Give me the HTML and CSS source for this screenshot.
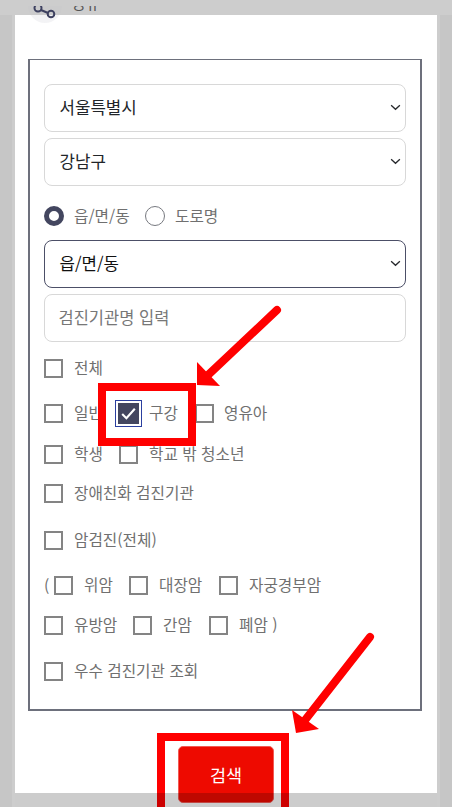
FILE: index.html
```html
<!DOCTYPE html>
<html lang="ko">
<head>
<meta charset="utf-8">
<title>검진기관 찾기</title>
<link rel="stylesheet" href="styles.css">
</head>
<body>
<div class="page">
  <div class="behind">
    <span class="share-icon">
      <svg width="34" height="34" viewBox="0 0 34 34"><circle cx="10" cy="19" r="3.500"/><circle cx="23" cy="25" r="3.300"/><path d="M13 21 L20 24"/></svg>
    </span>
    <span class="share-label">공유</span>
  </div>
  <main class="modal">
    <form class="box">
      <div class="select"><span>서울특별시</span><svg class="chev" viewBox="0 0 12 8"><path d="M1 1.500 L6 6 L11 1.500"/></svg></div>
      <div class="select"><span>강남구</span><svg class="chev" viewBox="0 0 12 8"><path d="M1 1.500 L6 6 L11 1.500"/></svg></div>
      <div class="radios">
        <span class="radio on"></span><span class="lbl w-r">읍/면/동</span>
        <span class="radio"></span><span class="lbl">도로명</span>
      </div>
      <div class="select focus"><span>읍/면/동</span><svg class="chev" viewBox="0 0 12 8"><path d="M1 1.500 L6 6 L11 1.500"/></svg></div>
      <div class="select input"><span>검진기관명 입력</span></div>
      <div class="row r1"><span class="cb"></span><span class="lbl">전체</span></div>
      <div class="row r2">
        <span class="cb"></span><span class="lbl w-a">일반</span>
        <span class="cb checked"><svg viewBox="0 0 20 20"><path d="M4 10.500 L8 14.500 L16 5.500"/></svg></span><span class="lbl w-b">구강</span>
        <span class="cb cb-tight"></span><span class="lbl">영유아</span>
      </div>
      <div class="row r3"><span class="cb"></span><span class="lbl w-c">학생</span><span class="cb"></span><span class="lbl">학교 밖 청소년</span></div>
      <div class="row r4"><span class="cb"></span><span class="lbl">장애친화 검진기관</span></div>
      <div class="row r5"><span class="cb"></span><span class="lbl">암검진(전체)</span></div>
      <div class="row r6"><span class="paren">(</span><span class="cb"></span><span class="lbl w-d">위암</span><span class="cb"></span><span class="lbl w-e">대장암</span><span class="cb"></span><span class="lbl">자궁경부암</span></div>
      <div class="row r7"><span class="cb"></span><span class="lbl w-f">유방암</span><span class="cb"></span><span class="lbl w-g">간암</span><span class="cb"></span><span class="lbl">폐암 )</span></div>
      <div class="row r8"><span class="cb"></span><span class="lbl">우수 검진기관 조회</span></div>
    </form>
    <div class="actions"><button type="button" class="search">검색</button></div>
  </main>
  <svg class="marks" width="452" height="807" viewBox="0 0 452 807">
    <rect x="102" y="387" width="90" height="55" class="frame"/>
    <rect x="161" y="737" width="124" height="74" class="frame"/>
    <path d="M277 310 L207 376" class="shaft"/>
    <path d="M197 362 L197 385 L220 386 Z" class="head"/>
    <path d="M370 637 L302 724" class="shaft"/>
    <path d="M292 710 L296 733 L319 729 Z" class="head"/>
  </svg>
  <div class="bottom-shade"></div>
</div>
</body>
</html>
```
FILE: styles.css
```css
* { box-sizing: border-box; }
html, body { margin: 0; padding: 0; }
body { font-family: "Noto Sans CJK KR", "Noto Sans", sans-serif; background: #c6c6c6; }
.page { position: relative; width: 452px; height: 807px; overflow: hidden; padding: 15px 15px 0; background: linear-gradient(#cdcdcd 15px, transparent 15px), linear-gradient(90deg, #c6c6c6 12px, #cdcdcd 12px, #cdcdcd 440px, #c6c6c6 440px); }
.behind { position: absolute; left: 28px; top: -11px; display: flex; align-items: flex-start; z-index: 2; clip-path: inset(17px 0 0 0); }
.share-icon { width: 34px; height: 34px; border-radius: 50%; background: linear-gradient(#cbcbcc 26px, #f3f3f5 26px); display: block; }
.share-icon svg { display: block; fill: none; stroke: #3e4160; stroke-width: 2; }
.share-label { font-size: 15px; line-height: 20px; color: #555; margin: 4px 0 0 10px; height: 20px; }
.modal { width: 422px; height: 792px; background: #fff; padding: 44px 13px 0; }
.box { width: 394px; height: 652px; border: 2px solid #6d707c; border-width: 1px 2px 2px 2px; padding: 24px 14px 0 14px; }
.select { height: 48px; border: 1.500px solid #d8d8d8; border-radius: 8px; display: flex; align-items: center; justify-content: space-between; padding: 0 4px 2px 14.500px; font-size: 16.800px; color: #212529; margin-bottom: 6px; background: #fff; }
.select.focus { border-color: #4c4f67; color: #111; }
.select.input { color: #777; font-size: 16.500px; padding-left: 13.500px; }
.chev { width: 11px; height: 7px; fill: none; stroke: #26282c; stroke-width: 1.500; }
.radios { display: flex; align-items: center; height: 24px; margin: 18px 0 12px; }
.radio { width: 20px; height: 20px; border-radius: 50%; border: 1.500px solid #77797f; margin-right: 10px; flex: none; }
.radio.on { border: 5.500px solid #43465f; background: #fff; }
.w-r { width: 71px; }
.lbl { font-size: 15.700px; line-height: 20px; color: #707070; white-space: nowrap; }
.row { display: flex; align-items: center; height: 20px; }
.cb { width: 19px; height: 19px; border: 2px solid #848484; margin-right: 11px; flex: none; background: #fff; }
.cb-tight { margin-right: 10px; }
.cb.checked { width: 27px; height: 27px; margin: 0 7px 0 -4px; border: 1.500px solid #2b3f9f; padding: 2px; background: #fff; }
.cb.checked svg { display: block; width: 100%; height: 100%; background: #43465f; fill: none; stroke: #fff; stroke-width: 2; }
.w-a { width: 45px; }
.w-b { width: 46px; }
.w-c { width: 45px; }
.w-d { width: 45px; }
.w-e { width: 60px; }
.w-f { width: 59px; }
.w-g { width: 46px; }
.paren { font-size: 15.700px; color: #707070; width: 10px; }
.r1 { margin-top: 16px; }
.r2 { margin-top: 25px; }
.r3 { margin-top: 21px; }
.r4 { margin-top: 19px; }
.r5 { margin-top: 27px; }
.r6 { margin-top: 25px; }
.r7 { margin-top: 20px; }
.r8 { margin-top: 26px; }
.actions { display: flex; justify-content: center; margin-top: 35px; }
.search { width: 96px; height: 57px; background: #ee0a00; border: 1px solid #f25a55; border-radius: 5px; color: #fff; font: 17.500px "Noto Sans CJK KR", sans-serif; }
.bottom-shade { position: absolute; left: 15px; width: 422px; top: 793px; height: 14px; background: rgba(0,0,0,.2); z-index: 3; }
.marks { position: absolute; left: 0; top: 0; z-index: 2; }
.frame { fill: none; stroke: #ff0000; stroke-width: 8; }
.shaft { stroke: #ff0000; stroke-width: 8; stroke-linecap: round; fill: none; }
.head { fill: #ff0000; }
```
